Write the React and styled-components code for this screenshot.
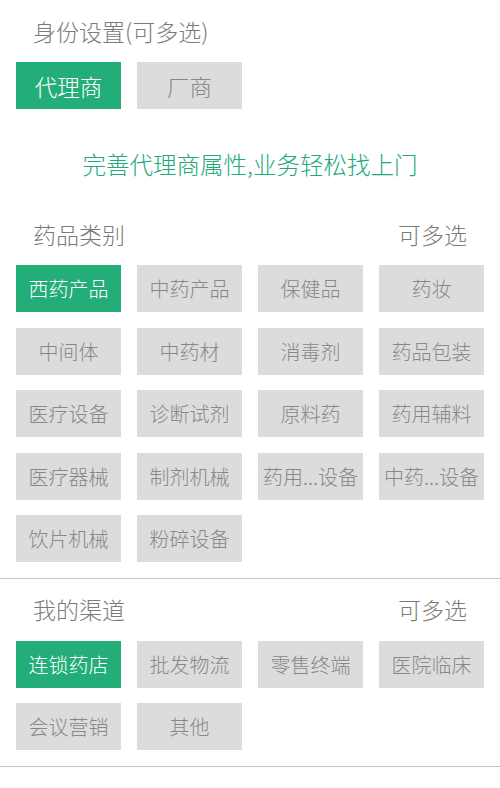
import React, { useState } from 'react'
import styled, { createGlobalStyle } from 'styled-components'

const GlobalStyle = createGlobalStyle`
  body {
    margin: 0;
    background: #ffffff;
    font-family: "Noto Sans CJK SC", "Noto Sans", sans-serif;
    font-weight: 300;
  }
`

const identities = ['代理商', '厂商']
const categories = [
  '西药产品', '中药产品', '保健品', '药妆',
  '中间体', '中药材', '消毒剂', '药品包装',
  '医疗设备', '诊断试剂', '原料药', '药用辅料',
  '医疗器械', '制剂机械', '药用...设备', '中药...设备',
  '饮片机械', '粉碎设备',
]
const channels = ['连锁药店', '批发物流', '零售终端', '医院临床', '会议营销', '其他']

const App = () => {
  const [identity] = useState(['代理商'])
  const [cats] = useState(['西药产品'])
  const [chans] = useState(['连锁药店'])

  return (
    <>
      <GlobalStyle />
      <Page>
        <Header>身份设置(可多选)</Header>
        <Options>
          {identities.map(item => (
            <Chip key={item} $big $active={identity.includes(item)}>{item}</Chip>
          ))}
        </Options>
        <Slogan>完善代理商属性,业务轻松找上门</Slogan>

        <Header>
          <span>药品类别</span>
          <span>可多选</span>
        </Header>
        <Options>
          {categories.map(item => (
            <Chip key={item} $active={cats.includes(item)}>{item}</Chip>
          ))}
        </Options>
        <Divider />

        <Header>
          <span>我的渠道</span>
          <span>可多选</span>
        </Header>
        <Options>
          {channels.map(item => (
            <Chip key={item} $active={chans.includes(item)}>{item}</Chip>
          ))}
        </Options>
        <Divider />
      </Page>
    </>
  )
}

const Page = styled.div`
  width: 500px;
  min-height: 788px;
  background: #fff;
`

const Header = styled.div`
  height: 62px;
  display: flex;
  align-items: center;
  justify-content: space-between;
  padding: 0 33px 1px 33px;
  box-sizing: border-box;
  font-size: 23px;
  color: #7b7b7b;
`

const Options = styled.div`
  display: grid;
  grid-template-columns: repeat(4, 105px);
  grid-auto-rows: 47px;
  column-gap: 16px;
  row-gap: 15.5px;
  padding: 0 16px;
`

const Chip = styled.div`
  display: flex;
  align-items: center;
  justify-content: center;
  white-space: nowrap;
  font-size: ${({ $big }) => ($big ? '22.5px' : '20px')};
  background: ${({ $active }) => ($active ? '#22ad79' : '#dcdcdc')};
  color: ${({ $active }) => ($active ? '#ffffff' : '#888888')};
`

const Slogan = styled.div`
  margin: 35px 0 19px;
  line-height: 40px;
  text-align: center;
  font-size: 23.5px;
  color: #22a97a;
`

const Divider = styled.div`
  height: 1px;
  background: #c6c6c6;
  margin-top: 15.5px;
`

export default App
